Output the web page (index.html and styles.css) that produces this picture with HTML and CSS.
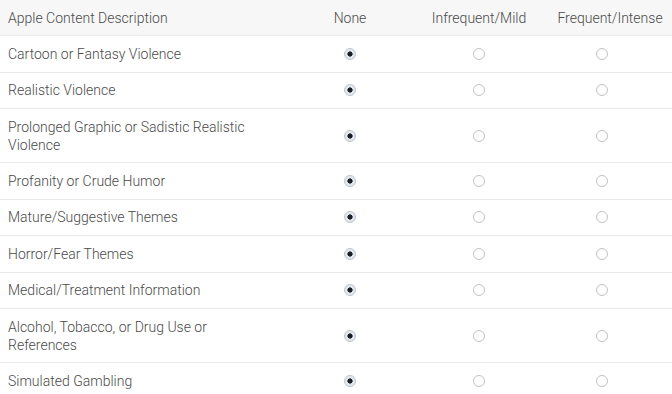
FILE: index.html
```html
<!DOCTYPE html>
<html>
<head>
<meta charset="utf-8">
<link rel="stylesheet" href="styles.css">
</head>
<body>
<div class="table">
  <div class="row head">
    <div class="label">Apple Content Description</div>
    <div class="col">None</div>
    <div class="col">Infrequent/Mild</div>
    <div class="col last">Frequent/Intense</div>
  </div>
  <div class="row"><div class="label">Cartoon or Fantasy Violence</div><div class="col"><span class="radio on"></span></div><div class="col"><span class="radio"></span></div><div class="col"><span class="radio"></span></div></div>
  <div class="row"><div class="label">Realistic Violence</div><div class="col"><span class="radio on"></span></div><div class="col"><span class="radio"></span></div><div class="col"><span class="radio"></span></div></div>
  <div class="row"><div class="label">Prolonged Graphic or Sadistic Realistic Violence</div><div class="col"><span class="radio on"></span></div><div class="col"><span class="radio"></span></div><div class="col"><span class="radio"></span></div></div>
  <div class="row"><div class="label">Profanity or Crude Humor</div><div class="col"><span class="radio on"></span></div><div class="col"><span class="radio"></span></div><div class="col"><span class="radio"></span></div></div>
  <div class="row"><div class="label">Mature/Suggestive Themes</div><div class="col"><span class="radio on"></span></div><div class="col"><span class="radio"></span></div><div class="col"><span class="radio"></span></div></div>
  <div class="row"><div class="label">Horror/Fear Themes</div><div class="col"><span class="radio on"></span></div><div class="col"><span class="radio"></span></div><div class="col"><span class="radio"></span></div></div>
  <div class="row"><div class="label">Medical/Treatment Information</div><div class="col"><span class="radio on"></span></div><div class="col"><span class="radio"></span></div><div class="col"><span class="radio"></span></div></div>
  <div class="row"><div class="label">Alcohol, Tobacco, or Drug Use or References</div><div class="col"><span class="radio on"></span></div><div class="col"><span class="radio"></span></div><div class="col"><span class="radio"></span></div></div>
  <div class="row"><div class="label">Simulated Gambling</div><div class="col"><span class="radio on"></span></div><div class="col"><span class="radio"></span></div><div class="col"><span class="radio"></span></div></div>
</div>
</body>
</html>
```
FILE: styles.css
```css
html, body {
  margin: 0;
  padding: 0;
  background: #fff;
}
body {
  font-family: Roboto, "Liberation Sans", sans-serif;
  font-weight: 300;
  font-size: 14px;
  color: #4a4a4a;
}
.table {
  width: 672px;
}
.row {
  display: grid;
  grid-template-columns: 290px 120px 138px 108px 16px;
  align-items: center;
  min-height: 35.5px;
  border-bottom: 1px solid #e9e9e9;
}
.row.head {
  background: #f7f7f7;
  min-height: 35px;
}
.label {
  padding: 8.5px 0 8.5px 8px;
  line-height: 18px;
  max-width: 250px;
}
.col {
  display: flex;
  justify-content: center;
  align-items: center;
  line-height: 18px;
  white-space: nowrap;
}
.head .col.last {
  grid-column: 4 / 6;
}
.radio {
  display: block;
  width: 12px;
  height: 12px;
  box-sizing: border-box;
  border-radius: 50%;
  border: 1px solid #c2c2c2;
  background: #fff;
}
.radio.on {
  border: 1px solid #bcc3cd;
  background: radial-gradient(circle, #1b1f25 0, #1b1f25 2.3px, #dfe4eb 2.9px, #eef1f5 100%);
}
```
